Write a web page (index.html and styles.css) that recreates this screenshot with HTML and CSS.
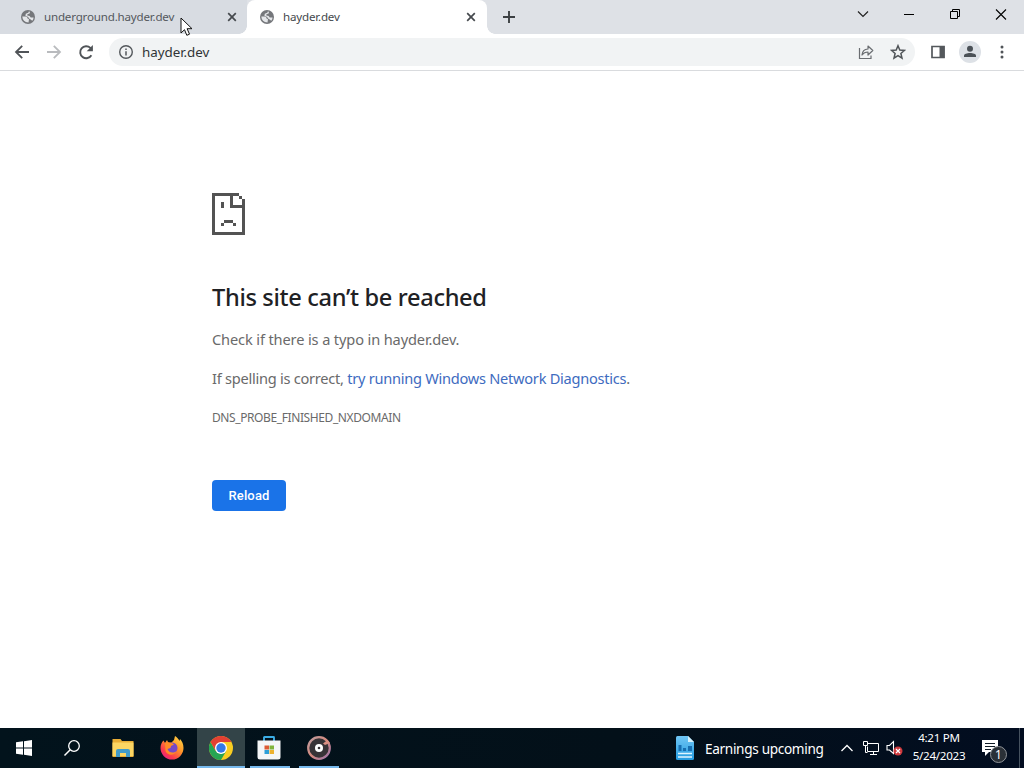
FILE: index.html
```
<!DOCTYPE html>
<html lang="en">
  <head>
    <meta charset="utf-8">
    <title>hayder.dev</title>
    <link rel="stylesheet" href="styles.css">
  </head>
  <body>
    <svg class="defs" width="0" height="0">
      <symbol id="globe" viewBox="0 0 14 14">
        <circle cx="7" cy="7" r="7" fill="#75777b"/>
        <path d="M1.3 6.5 4.6 6.6Q6.5 6.7 6.600 8.600L8 9.200 7.500 12.600Q1.600 12 1.300 6.500zM7.800 1.400 9 1.700 8.600 3.400 6.400 4.200 6.300 5.500 8.600 6 9.700 7.600 12.600 7.400Q12.500 9.400 11.300 10.800L9.300 9.200 8 8.600 7.200 7 4.400 5.700 4.800 3.700 7.300 2.700z" fill="#e4e6e9"/>
      </symbol>
      <symbol id="cross" viewBox="0 0 10 10">
        <path d="M1.2 1.2l7.6 7.6M8.8 1.2 1.2 8.8" fill="none" stroke="#45494d" stroke-width="1.7"/>
      </symbol>
    </svg>

    <div class="tabs">
      <div class="tab">
        <svg class="favicon"><use href="#globe"/></svg>
        <span class="title">underground.hayder.dev</span>
        <svg class="close"><use href="#cross"/></svg>
      </div>
      <div class="tab active">
        <svg class="favicon"><use href="#globe"/></svg>
        <span class="title">hayder.dev</span>
        <svg class="close"><use href="#cross"/></svg>
      </div>
      <svg class="newtab" width="12" height="12"><path d="M6 0v12M0 6h12" stroke="#3c4043" stroke-width="1.9"/></svg>
      <div class="winbuttons">
        <svg width="46" height="30"><path d="M18 11.5l5 5 5-5" fill="none" stroke="#222" stroke-width="1.2"/></svg>
        <svg width="46" height="30"><path d="M18 14.5h10" stroke="#000"/></svg>
        <svg width="46" height="30"><path d="M18.5 11.5h7v7h-7zM20.5 11.5v-2h7v7h-2" fill="none" stroke="#000"/></svg>
        <svg width="46" height="30"><path d="M18 9.5l10 10M28 9.5l-10 10" stroke="#000" stroke-width="1.1"/></svg>
      </div>
    </div>

    <div class="toolbar">
      <svg class="nav" viewBox="0 0 16 16"><path d="M15 8H2.5M8.2 1.8 2 8l6.200 6.200" fill="none" stroke="#505458" stroke-width="1.8"/></svg>
      <svg class="nav" viewBox="0 0 16 16"><path d="M1 8h12.5M7.8 1.8 14 8l-6.200 6.200" fill="none" stroke="#b9bbbe" stroke-width="1.8"/></svg>
      <svg class="nav" viewBox="0 0 16 16"><path d="M13.400 11.200A6 6 0 1 1 12.400 3.900L14 5.600" fill="none" stroke="#505458" stroke-width="1.9"/><path d="M14.900 1v6.200H8.700z" fill="#505458"/></svg>
      <div class="omnibox">
        <svg width="16" height="16"><circle cx="8" cy="8" r="6.300" fill="none" stroke="#54585c" stroke-width="1.4"/><path d="M8 7.200v4.200M8 4.500v1.600" stroke="#54585c" stroke-width="1.5"/></svg>
        <span class="url">hayder.dev</span>
        <svg class="share" width="16" height="16"><path d="M1.500 4v10.500h11.500V11.500" fill="none" stroke="#6a6d71" stroke-width="1.2"/><path d="M4 11c.3-3.800 2.300-5.800 6-6V2l4.800 4.500L10 11V8C7.200 8 5.400 9 4 11z" fill="none" stroke="#6a6d71" stroke-width="1.2" stroke-linejoin="round"/></svg>
        <svg width="16" height="16"><path d="M8 1.700l1.800 4.300 4.700.4-3.600 3.100 1.100 4.600L8 11.600l-4 2.500 1.100-4.600L1.500 6.400l4.700-.4z" fill="none" stroke="#505458" stroke-width="1.5"/></svg>
      </div>
      <svg class="panel" width="16" height="16"><path d="M2 2.500h12v11H2z" fill="none" stroke="#54585c" stroke-width="1.7"/><path d="M9.500 2h5v12h-5z" fill="#54585c"/></svg>
      <svg class="avatar" width="22" height="22"><circle cx="11" cy="11" r="11" fill="#dde1e6"/><circle cx="11" cy="7.700" r="3" fill="#4b5157"/><path d="M5 16v-1.400c0-3.600 12-3.600 12 0V16z" fill="#4b5157"/></svg>
      <svg width="4" height="14"><g fill="#505458"><circle cx="2" cy="2" r="1.5"/><circle cx="2" cy="7" r="1.5"/><circle cx="2" cy="12" r="1.5"/></g></svg>
    </div>

    <main>
      <svg class="sad" viewBox="0 0 11 14"><path d="M0 0h9v1H7v3h3V2h1v12H0zM1 1v12h9V5H6V1zM9 1h1v1H9zM3 3h1v2H3zM4 9h3v1H4zM3 10h1v1H3zM7 10h1v1H7z" fill="#535353" fill-rule="evenodd"/></svg>
      <h1>This site can’t be reached</h1>
      <p>Check if there is a typo in hayder.dev.</p>
      <p class="hint">If spelling is correct, <a>try running Windows Network Diagnostics</a>.</p>
      <div class="code">DNS_PROBE_FINISHED_NXDOMAIN</div>
      <button>Reload</button>
    </main>

    <div class="taskbar">
      <div class="app start"><svg width="16" height="16"><path d="M0 2.300 7 1.300v6.200H0zM8 1.200 16 0v7.500H8zM0 8.500h7v6.200l-7-1zM8 8.500h8V16l-8-1.200z" fill="#fff"/></svg></div>
      <div class="app search"><svg width="18" height="18"><circle cx="11" cy="7" r="5.300" fill="none" stroke="#fff" stroke-width="1.3"/><path d="M7.200 10.800 1.500 16.500" stroke="#fff" stroke-width="1.5"/></svg></div>
      <div class="app"><svg width="24" height="24"><path d="M1.500 3h8l1.500 2h11.500v16h-21z" fill="#e9ae36"/><path d="M1.500 6.500h21V20h-21z" fill="#fcd663"/><path d="M5 21v-6q0-2 2-2h10q2 0 2 2v6h-4v-4H9v4z" fill="#419bc9"/></svg></div>
      <div class="app">
        <svg width="24" height="24">
          <defs><linearGradient id="fox" x1="1" y1="0" x2=".2" y2="1"><stop offset="0" stop-color="#ffe24a"/><stop offset=".45" stop-color="#ff9529"/><stop offset=".8" stop-color="#fb384e"/><stop offset="1" stop-color="#e6208a"/></linearGradient></defs>
          <path d="M3.500 4.500 5 7l2-3 1.500 3 3-.5L14 4l1-4c2 1 3.500 3 4.500 5l.5-2c2 2 3.500 5 3.500 9a11.500 11.500 0 0 1-23 0C.5 9 1.500 6.500 3.500 4.500z" fill="url(#fox)"/>
          <circle cx="12" cy="12" r="5.500" fill="#7549c9"/>
          <path d="M5 7c3-2 5 0 7 0l2 1.500-3 1.500-.5 2-3 1c1.500 4 6 4.500 9 2-2 5-9 5-11 0z" fill="#ff8b27"/>
        </svg>
      </div>
      <div class="app current">
        <svg width="24" height="24">
          <circle cx="12" cy="12" r="12" fill="#f9cd22"/>
          <path d="M1.600 6 6.800 15 12 18 17.200 15 12 24A12 12 0 0 1 1.600 6z" fill="#26a552"/>
          <path d="M1.600 6A12 12 0 0 1 22.400 6H12L6.800 15z" fill="#e24033"/>
          <circle cx="12" cy="12" r="6" fill="#fff"/><circle cx="12" cy="12" r="4.700" fill="#3479e8"/>
        </svg>
      </div>
      <div class="app running store">
        <svg width="24" height="24"><path d="M7 5V1.500Q7 1 7.500 1h9q.5 0 .5.500V5" fill="none" stroke="#3bade5" stroke-width="1.9"/><path d="M.5 4.500h23V21q0 2.500-2.500 2.500H3Q.5 23.500.5 21z" fill="#f4f6f7"/><path d="M7.500 9.500H12v4H7.500z" fill="#dc5b35"/><path d="M12.500 9.500H17v4h-4.500z" fill="#80b43c"/><path d="M7.500 14H12v4H7.500z" fill="#2d9fd8"/><path d="M12.500 14H17v4h-4.500z" fill="#edb22e"/></svg>
      </div>
      <div class="app running">
        <svg width="24" height="24">
          <defs><linearGradient id="ring" x1="0" y1="0" x2="1" y2="1"><stop offset="0" stop-color="#bb9da1"/><stop offset=".5" stop-color="#d7897d"/><stop offset="1" stop-color="#9673ac"/></linearGradient></defs>
          <circle cx="12" cy="12" r="10.800" fill="#373337" stroke="url(#ring)" stroke-width="2.2"/><path d="M16 7.500 20.500 4l2.500 3-5 2z" fill="#d98f82"/><circle cx="12" cy="12" r="4" fill="#fff"/><circle cx="12" cy="12" r="1.300" fill="#373337"/>
        </svg>
      </div>

      <div class="news">
        <svg width="18" height="24"><defs><linearGradient id="doc" x2="0" y2="1"><stop offset="0" stop-color="#70c6f5"/><stop offset="1" stop-color="#249be0"/></linearGradient></defs><path d="M0 1.500Q0 0 1.500 0H12l6 6v16.500q0 1.500-1.500 1.500h-15Q0 24 0 22.500z" fill="url(#doc)"/><path d="M12 0v6h6z" fill="#d5f1fc"/><path d="M2.500 9h3v6h-3zM7 12h3v3H7zM12 10h4v5h-4z" fill="#176eb1"/><path d="M2 17.500h14M2 21h14" stroke="#dff5ff" stroke-width="1.5"/></svg>
        <span>Earnings upcoming</span>
      </div>
      <div class="tray">
        <svg width="14" height="16"><path d="M1.500 11 7 5.500l5.500 5.500" fill="none" stroke="#fff" stroke-width="1.3"/></svg>
        <svg class="net" width="17" height="16"><path d="M4.500 3.500h11v8h-11v-5M10.500 11.500v3M7 14.500h7M.5 1.500h4v4h-4zM2.500 5.500v7h2" fill="none" stroke="#fff"/></svg>
        <svg class="sound" width="17" height="16"><path d="M1 5.500h2.500l4-4v12l-4-3.500H1z" fill="none" stroke="#fff" stroke-width="1.1"/><circle cx="12" cy="11" r="4.500" fill="#cf3a3e"/><path d="M10 9l4 4M14 9l-4 4" stroke="#fff" stroke-width="1.2"/></svg>
      </div>
      <div class="clock"><div>4:21 PM</div><div>5/24/2023</div></div>
      <div class="notes">
        <svg width="24" height="24"><path d="M0 1h16v12H7l-4 4v-4H0z" fill="#fff"/><path d="M3 4.500h10M3 7.500h10M3 10.500h6" stroke="#101c27"/></svg>
        <span class="badge">1</span>
      </div>
    </div>

    <svg class="cursor" width="13" height="20"><path d="M1 1v15l3.500-3.300 2.300 5.600 2.700-1.100-2.400-5.500H12z" fill="#fff" stroke="#111"/></svg>
  </body>
</html>
```
FILE: styles.css
```
body {margin:0;width:1024px;height:768px;overflow:hidden;position:relative;display:flex;flex-direction:column;background:#fff;font:14px "Noto Sans","Open Sans",sans-serif}
svg {display:block;flex:none}
.defs {position:absolute}

/* tab strip */
.tabs {height:34px;flex:none;display:flex;background:#dee1e6}
.tab {box-sizing:border-box;width:240px;height:34px;display:flex;align-items:center;padding:0 11px 0 13px;font-size:11.6px;letter-spacing:-0.2px;color:#54585d}
.tab:first-child {width:247px;padding:0 10px 0 21px;background:#d8dce2;border-radius:0 0 8px 0}
.tab.active {position:relative;background:#fff;border-radius:8px 8px 0 0;color:#45494d}
.tab.active::before,.tab.active::after {content:"";position:absolute;bottom:0;width:8px;height:8px}
.tab.active::before {left:-8px;background:radial-gradient(circle at 0 0,#d8dce2 7.5px,#fff 8px)}
.tab.active::after {right:-8px;background:radial-gradient(circle at 100% 0,#dee1e6 7.5px,#fff 8px)}
.favicon {width:14px;height:14px;margin-right:9px}
.title {flex:1;white-space:nowrap;margin-top:-1px}
.close {width:10px;height:10px}
.newtab {margin:11px 0 0 16px}
.winbuttons {display:flex;margin-left:auto}

/* toolbar */
.toolbar {box-sizing:border-box;height:37px;flex:none;display:flex;align-items:center;border-bottom:1px solid #d9dbde;padding-left:14px}
.nav {width:16px;height:16px;margin-right:16px}
.omnibox {box-sizing:border-box;width:806px;height:28px;margin-left:-1px;padding:0 9px;border-radius:14px;background:#f1f3f4;display:flex;align-items:center}
.url {flex:1;margin-left:8px;font-size:13.4px;letter-spacing:-0.05px;color:#303336}
.share {margin-right:16px}
.panel {margin-left:15px}
.avatar {margin:0 19px 0 13px}

/* error page */
main {flex:1;padding:122px 0 0 212px;color:#6a6a6a}
.sad {width:33px;height:42px}
h1 {margin:46px 0 0;font-size:23.6px;line-height:33px;font-weight:500;letter-spacing:-0.33px;color:#202124}
p {margin:15px 0 0;font-size:14.6px;letter-spacing:-0.13px;line-height:24px}
h1+p {margin-top:13px}
.hint {letter-spacing:-0.26px}
a {color:#3e6bc0}
.code {margin-top:18px;font-size:12px;letter-spacing:-0.4px;line-height:20px}
button {display:block;margin-top:52px;width:74px;height:31px;padding:0;border:0;border-radius:4px;background:#1a73e8;color:#fff;font:500 13px Roboto,sans-serif;letter-spacing:0.15px}

/* taskbar */
.taskbar {height:40px;flex:none;display:flex;background:linear-gradient(90deg,#02131c,#031019 60%,#020d20);color:#fff}
.app {box-sizing:border-box;width:49px;height:40px;display:flex;align-items:center;justify-content:center}
.start {width:48px}
.search {width:50px;padding-right:3px}
.current {width:48px;margin-left:1px;background:#334448;border-bottom:2px solid #76b9ed;padding-top:2px}
.running {width:40px;margin-left:5px;border-bottom:2px solid #76b9ed;padding-top:2px}
.store {padding-right:2px}
.running+.running {margin-left:9px}
.news {display:flex;align-items:center;margin-left:auto}
.news span {width:119px;margin:1px 0 0 11px;white-space:nowrap;font-size:13.6px;letter-spacing:-0.32px}
.tray {display:flex;align-items:center;margin-left:16px}
.net {margin-left:9px}
.sound {margin-left:6px;margin-right:1px}
.clock {width:60px;margin-left:5px;padding-top:1px;text-align:center;font-size:11.6px;letter-spacing:-0.27px;line-height:18px;white-space:nowrap}
.notes {position:relative;width:37px;margin:0 4px 0 13px;padding-top:11px;border-right:1px solid #46525f}
.badge {position:absolute;left:8px;top:18px;box-sizing:border-box;width:17px;height:17px;border:1px solid #909499;border-radius:50%;background:#2a3037;font-size:12px;line-height:15px;text-align:center}

.cursor {position:absolute;left:180px;top:17px}
```
